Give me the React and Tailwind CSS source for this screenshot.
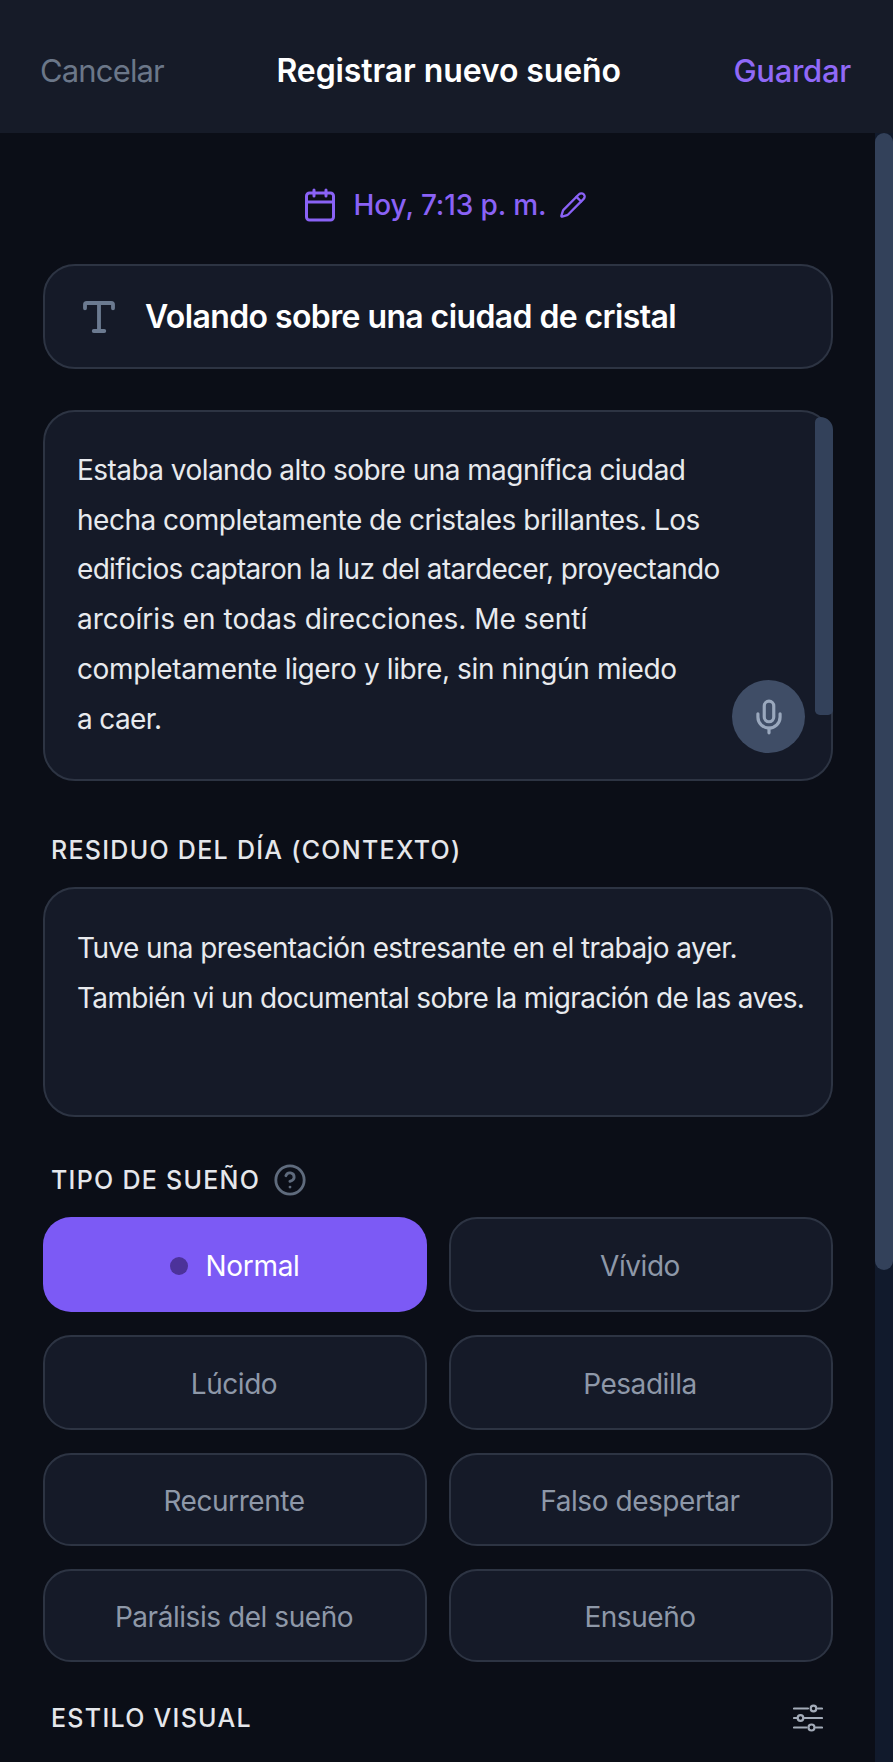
import React from "react";
import { Calendar, Pencil, Type, Mic, CircleHelp } from "lucide-react";

const types = ["Vívido", "Lúcido", "Pesadilla", "Recurrente", "Falso despertar", "Parálisis del sueño", "Ensueño"];

function Label({ children }) {
  return <span className="text-[25px] font-medium tracking-[1.28px] text-[#e5e7eb] leading-none">{children}</span>;
}

function Sliders() {
  return (
    <svg width="30" height="28" viewBox="0 0 30 28" fill="none" stroke="#a3abb8" strokeWidth="2.2" strokeLinecap="round">
      <path d="M1 4.5H15M25 4.5H29" />
      <circle cx="20.5" cy="4.5" r="2.8" />
      <path d="M1 14H4M11.5 14H29" />
      <circle cx="7.5" cy="14" r="2.8" />
      <path d="M1 23.5H13.5M23 23.5H29" />
      <circle cx="18.5" cy="23.5" r="3" />
    </svg>
  );
}

export default function App() {
  return (
    <div className="w-[893px] h-[1762px] overflow-hidden flex flex-col bg-[#0b0e17] font-['Inter','Noto_Sans',sans-serif]">
      <header className="h-[133px] shrink-0 bg-[#161b28] flex items-center justify-between pl-[40px] pr-[42px] pt-[9px]">
        <span className="text-[31px] tracking-[-0.85px] text-[#6b7789]">Cancelar</span>
        <span className="text-[32px] font-semibold text-white tracking-[-0.1px]">Registrar nuevo sueño</span>
        <span className="text-[31px] font-medium tracking-[-0.3px] text-[#9069f7]">Guardar</span>
      </header>
      <div className="flex flex-1 min-h-0">
        <main className="w-[875px] pl-[43px] pr-[42px] flex flex-col">
          <div className="h-[131px] shrink-0 flex items-center justify-center text-[#8a62f6] pt-[13px] pl-[13px]">
            <Calendar size={36} strokeWidth={2} />
            <span className="ml-[16px] text-[28px] font-medium tracking-[-0.1px]">Hoy, 7:13 p. m.</span>
            <Pencil size={28} strokeWidth={2} className="ml-[13px]" />
          </div>
          <div className="h-[105px] shrink-0 rounded-[32px] border-2 border-[#2d3443] bg-[#151a28] flex items-center pl-[33px]">
            <Type size={42} strokeWidth={2.2} className="text-[#6b7a90]" />
            <span className="ml-[25px] text-[32px] font-semibold tracking-[-0.6px] text-white">Volando sobre una ciudad de cristal</span>
          </div>
          <div className="relative mt-[41px] h-[371px] shrink-0 rounded-[32px] border-2 border-[#2d3443] bg-[#151a28] pl-[32px] pt-[34px] text-[28px] leading-[49.7px] text-[#e8eaee] whitespace-nowrap">
            <div className="tracking-[-0.55px]">Estaba volando alto sobre una magnífica ciudad</div>
            <div className="tracking-[-0.5px]">hecha completamente de cristales brillantes. Los</div>
            <div className="tracking-[-0.68px]">edificios captaron la luz del atardecer, proyectando</div>
            <div className="tracking-[0px]">arcoíris en todas direcciones. Me sentí</div>
            <div className="tracking-[-0.38px]">completamente ligero y libre, sin ningún miedo</div>
            <div className="tracking-[-0.62px]">a caer.</div>
            <div className="absolute right-[-2px] top-[5px] w-[18px] h-[298px] rounded-b-[9px] rounded-tl-[10px] rounded-tr-[24px] bg-[#33415a]" />
            <div className="absolute right-[26px] bottom-[26px] w-[73px] h-[73px] rounded-full bg-[#3f4d66] flex items-center justify-center text-[#9aa8bd]">
              <Mic size={38} strokeWidth={2} />
            </div>
          </div>
          <div className="mt-[55px] h-[28px] shrink-0 flex items-center pl-[8px]">
            <Label>RESIDUO DEL DÍA (CONTEXTO)</Label>
          </div>
          <div className="mt-[23px] h-[230px] shrink-0 rounded-[32px] border-2 border-[#2d3443] bg-[#151a28] pl-[32px] pt-[35px] text-[28px] leading-[49.7px] text-[#e8eaee] whitespace-nowrap">
            <div className="tracking-[-0.6px]">Tuve una presentación estresante en el trabajo ayer.</div>
            <div className="tracking-[-0.66px]">También vi un documental sobre la migración de las aves.</div>
          </div>
          <div className="mt-[48px] h-[30px] shrink-0 flex items-center pl-[8px] gap-[13px]">
            <Label>TIPO DE SUEÑO</Label>
            <CircleHelp size={34} strokeWidth={2} className="text-[#5f6b7d]" />
          </div>
          <div className="mt-[22px] grid grid-cols-2 gap-x-[22px] gap-y-[23px] shrink-0 grid-rows-[95px_95px_93px_93px]">
            <div className="rounded-[28px] bg-[#7c5af5] flex items-center justify-center text-[28px] font-normal tracking-[-0.3px] text-white pt-[2px]">
              <span className="w-[18px] h-[18px] rounded-full bg-[#4c329a] mr-[17px]" />
              Normal
            </div>
            {types.map((t) => (
              <div key={t} className="rounded-[28px] border-2 border-[#2d3443] bg-[#151a28] flex items-center justify-center pt-[2px] pr-[2px] text-[28px] tracking-[-0.45px] text-[#8e98a8]">
                {t}
              </div>
            ))}
          </div>
          <div className="mt-[41px] h-[30px] shrink-0 flex items-center justify-between pl-[8px] pr-[10px]">
            <Label>ESTILO VISUAL</Label>
            <Sliders />
          </div>
        </main>
        <div className="w-[18px] bg-[#111a2c] flex flex-col">
          <div className="h-[1137px] rounded-[9px] bg-[#33415a]" />
        </div>
      </div>
    </div>
  );
}
